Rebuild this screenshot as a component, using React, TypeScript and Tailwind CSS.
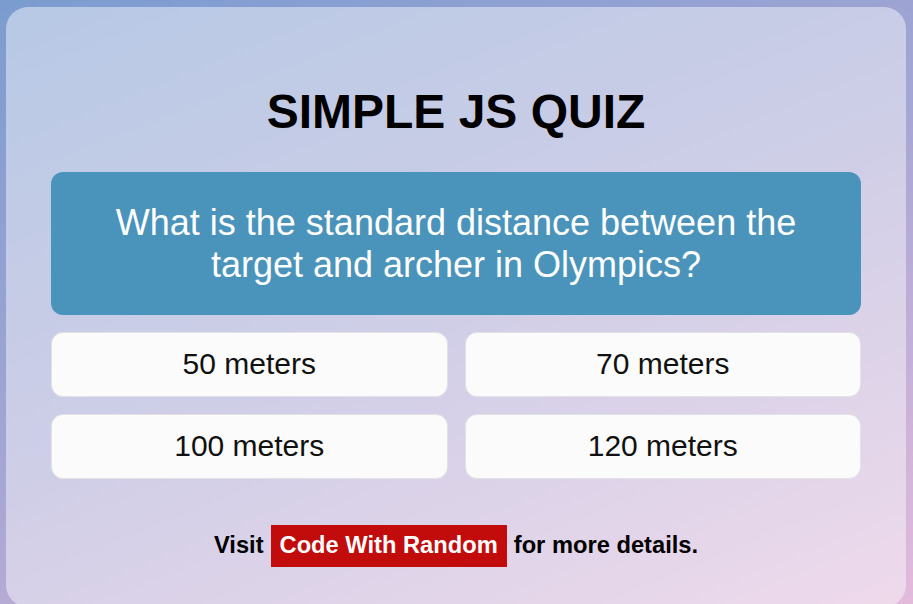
const question = {
  text: "What is the standard distance between the target and archer in Olympics?",
  answers: ["50 meters", "70 meters", "100 meters", "120 meters"],
};

function AnswerButton({ label }: { label: string }) {
  return (
    <button
      type="button"
      className="h-[65px] w-full rounded-[12px] border border-[#e2e2e6] bg-[#fbfbfb] text-[30px] leading-[1.15] text-[#111]"
    >
      {label}
    </button>
  );
}

export default function App() {
  return (
    <div
      className="h-[604px] overflow-hidden bg-[linear-gradient(158deg,#7b9cd0_0%,#a7a6d3_50%,#e2bbdb_100%)] pt-[7px]"
      style={{ fontFamily: '"Liberation Sans", Arial, sans-serif' }}
    >
      <div className="ml-[6px] h-[600px] w-[900px] rounded-[22px] bg-white/45 px-[45px] pt-[77px]">
        <h1 className="text-center text-[48px] font-bold leading-[1.15] text-black">
          SIMPLE JS QUIZ
        </h1>

        <div className="mt-[33px] rounded-[12px] bg-[#4a93bb] px-[40px] py-[30px] text-center text-[36px] leading-[1.15] text-white">
          {question.text}
        </div>

        <div className="mt-[17px] grid grid-cols-2 gap-[17px]">
          {question.answers.map((answer) => (
            <AnswerButton key={answer} label={answer} />
          ))}
        </div>

        <div className="mt-[46px] flex items-center justify-center gap-[7px] text-[23.7px] font-bold leading-[1.15] text-black">
          <span>Visit</span>
          <span className="flex h-[42px] items-center bg-[#c20b0b] px-[9px] text-white">
            Code With Random
          </span>
          <span>for more details.</span>
        </div>
      </div>
    </div>
  );
}
